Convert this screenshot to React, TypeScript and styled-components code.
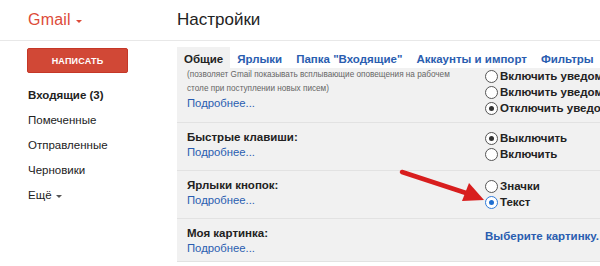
import React from 'react';
import styled, { createGlobalStyle } from 'styled-components';

const GlobalStyle = createGlobalStyle`
  html, body {
    margin: 0;
    padding: 0;
    background: #fff;
  }
  body {
    font-family: "Liberation Sans", Arial, sans-serif;
    color: #222;
  }
`;

const Frame = styled.div`
  position: relative;
  width: 600px;
  height: 266px;
  overflow: hidden;
  background: #fff;
`;

const Header = styled.div`
  display: flex;
  align-items: center;
  height: 40px;
  border-bottom: 1px solid #e8e8e8;
`;

const LogoBox = styled.div`
  width: 177px;
  box-sizing: border-box;
  padding-left: 28px;
  display: flex;
  align-items: center;
  gap: 5px;
`;

const Logo = styled.span`
  font-size: 16px;
  color: #dd4b39;
  letter-spacing: 0.2px;
`;

const Caret = styled.span<{ color: string }>`
  width: 0;
  height: 0;
  border-left: 3px solid transparent;
  border-right: 3px solid transparent;
  border-top: 3px solid ${(p) => p.color};
  margin-top: 2px;
`;

const PageTitle = styled.h1`
  margin: 0;
  font-size: 17px;
  font-weight: normal;
  color: #222;
`;

const Body = styled.div`
  display: flex;
`;

const Sidebar = styled.div`
  width: 177px;
  flex-shrink: 0;
  box-sizing: border-box;
  padding: 7px 0 0 27px;
`;

const ComposeButton = styled.button`
  width: 101px;
  height: 25px;
  border: 1px solid #c53727;
  border-radius: 2px;
  background: #d14836;
  color: #fff;
  font-family: inherit;
  font-size: 9px;
  font-weight: bold;
  letter-spacing: 0.2px;
  cursor: pointer;
`;

const NavList = styled.ul`
  list-style: none;
  margin: 10px 0 0;
  padding: 0;
`;

const NavItem = styled.li<{ active?: boolean }>`
  height: 25px;
  line-height: 25px;
  padding-left: 1px;
  font-size: 11.5px;
  font-weight: ${(p) => (p.active ? 'bold' : 'normal')};
  color: #222;
  display: flex;
  align-items: center;
  gap: 4px;
`;

const Main = styled.div`
  flex: 1;
  padding-top: 6px;
  min-width: 0;
`;

const TabBar = styled.div`
  display: flex;
  height: 21px;
  white-space: nowrap;
`;

const Tab = styled.div<{ active?: boolean }>`
  padding: 3px 7px 0;
  line-height: 18px;
  font-size: 11.5px;
  font-weight: bold;
  color: ${(p) => (p.active ? '#222' : '#2a5db0')};
  background: ${(p) => (p.active ? '#f1f1f1' : 'transparent')};
`;

const Panel = styled.div`
  background: #f1f1f1;
`;

const Row = styled.div<{ pad: string }>`
  display: flex;
  padding: ${(p) => p.pad};
  border-bottom: 1px solid #e2e2e2;
`;

const LabelCol = styled.div`
  width: 298px;
  flex-shrink: 0;
`;

const ValueCol = styled.div`
  white-space: nowrap;
`;

const Note = styled.div`
  font-size: 8.2px;
  line-height: 14px;
  color: #666;
`;

const Label = styled.div`
  font-size: 11.5px;
  font-weight: bold;
  line-height: 15px;
  color: #222;
`;

const More = styled.a`
  display: block;
  font-size: 11.3px;
  line-height: 14px;
  color: #2a5db0;
  text-decoration: none;
`;

const RadioLine = styled.label`
  display: flex;
  align-items: center;
  gap: 2px;
  height: 16px;
  font-size: 11.5px;
  font-weight: bold;
  color: #222;
`;

const Circle = styled.span<{ checked?: boolean; blue?: boolean }>`
  width: 11px;
  height: 11px;
  border-radius: 50%;
  border: 1px solid ${(p) => (p.blue ? '#2f7bd9' : '#555')};
  background: #fff;
  display: flex;
  align-items: center;
  justify-content: center;
  flex-shrink: 0;

  &::after {
    content: '';
    width: 5px;
    height: 5px;
    border-radius: 50%;
    background: ${(p) => (p.blue ? '#1f6fd1' : '#333')};
    display: ${(p) => (p.checked ? 'block' : 'none')};
  }
`;

const LinkValue = styled.a`
  font-size: 11.5px;
  font-weight: bold;
  line-height: 15px;
  color: #2a5db0;
  text-decoration: none;
`;

const ArrowLayer = styled.svg`
  position: absolute;
  left: 0;
  top: 0;
  pointer-events: none;
`;

const Radio = ({ text, checked, blue }: { text: string; checked?: boolean; blue?: boolean }) => (
  <RadioLine>
    <Circle checked={checked} blue={blue} />
    {text}
  </RadioLine>
);

const tabs = ['Общие', 'Ярлыки', 'Папка "Входящие"', 'Аккаунты и импорт', 'Фильтры'];
const nav = ['Помеченные', 'Отправленные', 'Черновики'];

export default function App() {
  return (
    <Frame>
      <GlobalStyle />
      <Header>
        <LogoBox>
          <Logo>Gmail</Logo>
          <Caret color="#dd4b39" />
        </LogoBox>
        <PageTitle>Настройки</PageTitle>
      </Header>
      <Body>
        <Sidebar>
          <ComposeButton>НАПИСАТЬ</ComposeButton>
          <NavList>
            <NavItem active>Входящие (3)</NavItem>
            {nav.map((n) => (
              <NavItem key={n}>{n}</NavItem>
            ))}
            <NavItem>
              Ещё <Caret color="#555" />
            </NavItem>
          </NavList>
        </Sidebar>
        <Main>
          <TabBar>
            {tabs.map((t, i) => (
              <Tab key={t} active={i === 0}>
                {t}
              </Tab>
            ))}
          </TabBar>
          <Panel>
            <Row pad="0 0 6px 10px">
              <LabelCol>
                <Note>(позволяет Gmail показывать всплывающие оповещения на рабочем</Note>
                <Note>столе при поступлении новых писем)</Note>
                <More href="#">Подробнее...</More>
              </LabelCol>
              <ValueCol>
                <Radio text="Включить уведомления о новых письмах" />
                <Radio text="Включить уведомления о важных письмах" />
                <Radio text="Отключить уведомления" checked />
              </ValueCol>
            </Row>
            <Row pad="7px 0 8px 10px">
              <LabelCol>
                <Label>Быстрые клавиши:</Label>
                <More href="#">Подробнее...</More>
              </LabelCol>
              <ValueCol>
                <Radio text="Выключить" checked />
                <Radio text="Включить" />
              </ValueCol>
            </Row>
            <Row pad="7px 0 8px 10px">
              <LabelCol>
                <Label>Ярлыки кнопок:</Label>
                <More href="#">Подробнее...</More>
              </LabelCol>
              <ValueCol>
                <Radio text="Значки" />
                <Radio text="Текст" checked blue />
              </ValueCol>
            </Row>
            <Row pad="7px 0 6px 10px">
              <LabelCol>
                <Label>Моя картинка:</Label>
                <More href="#">Подробнее...</More>
              </LabelCol>
              <ValueCol>
                <LinkValue href="#">Выберите картинку.</LinkValue>
              </ValueCol>
            </Row>
          </Panel>
        </Main>
      </Body>
      <ArrowLayer width="600" height="266" viewBox="0 0 600 266">
        <line x1="402" y1="172" x2="466" y2="193" stroke="#d81e1e" strokeWidth="4.5" strokeLinecap="round" />
        <polygon points="484,200 462,201 469,183" fill="#d81e1e" />
      </ArrowLayer>
    </Frame>
  );
}
